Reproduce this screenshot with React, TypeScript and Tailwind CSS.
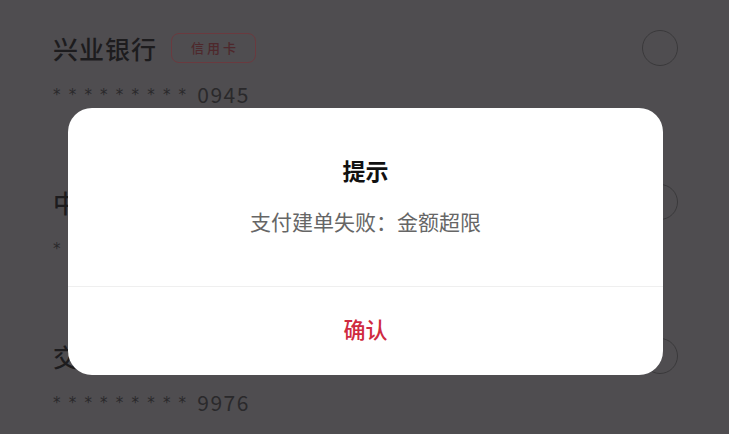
import React from "react";

type Card = {
  bank: string;
  tail: string;
  credit?: boolean;
};

const cards: Card[] = [
  { bank: "兴业银行", tail: "0945", credit: true },
  { bank: "中国银行", tail: "3218" },
  { bank: "交通银行", tail: "9976" },
];

const font = { fontFamily: '"Noto Sans CJK SC", "Noto Sans", sans-serif' };

const CardRow = ({ card }: { card: Card }) => (
  <div className="flex h-[154px] flex-col pl-[53px] pr-[51px] pt-[33px]">
    <div className="flex h-[30px] items-center justify-between">
      <div className="flex items-center gap-[14px]">
        <span className="text-[25px] font-medium leading-[30px] tracking-[1px] text-[#1d1c1e]">
          {card.bank}
        </span>
        {card.credit && (
          <span className="flex h-[30px] w-[85px] items-center justify-center rounded-[8px] border-[1.5px] border-[#6a3a3f] pl-[3px] text-[13px] font-medium tracking-[3px] text-[#4e282c]">
            信用卡
          </span>
        )}
      </div>
      <span className="size-[36px] rounded-full border-[1.5px] border-[#3a393b]" />
    </div>
    <div className="mt-[20px] flex h-[24px] items-center text-[#2a292b]">
      <span
        className="text-[15px] tracking-[8.2px]"
        style={{ fontFamily: '"DejaVu Sans", sans-serif' }}
      >
        *********
      </span>
      <span className="ml-[3px] text-[21px] tracking-[1.5px]">{card.tail}</span>
    </div>
  </div>
);

export default function App() {
  return (
    <div className="relative h-[434px] w-[729px] overflow-hidden bg-[#4f4d50]" style={font}>
      {cards.map((card) => (
        <CardRow key={card.tail} card={card} />
      ))}

      <div className="absolute left-[68px] top-[108px] w-[595px] overflow-hidden rounded-[24px] bg-white">
        <div className="flex flex-col items-center px-6 pb-[51px] pt-[47px]">
          <h2 className="text-[23px] font-bold leading-[30px] text-[#111]">提示</h2>
          <p className="mt-[22px] text-[21px] leading-[28px] text-[#666]">
            支付建单失败：金额超限
          </p>
        </div>
        <div className="h-px bg-[#efefef]" />
        <button className="flex h-[88px] w-full items-center justify-center pb-[6px] text-[22px] font-medium text-[#cf2a40]">
          确认
        </button>
      </div>
    </div>
  );
}
